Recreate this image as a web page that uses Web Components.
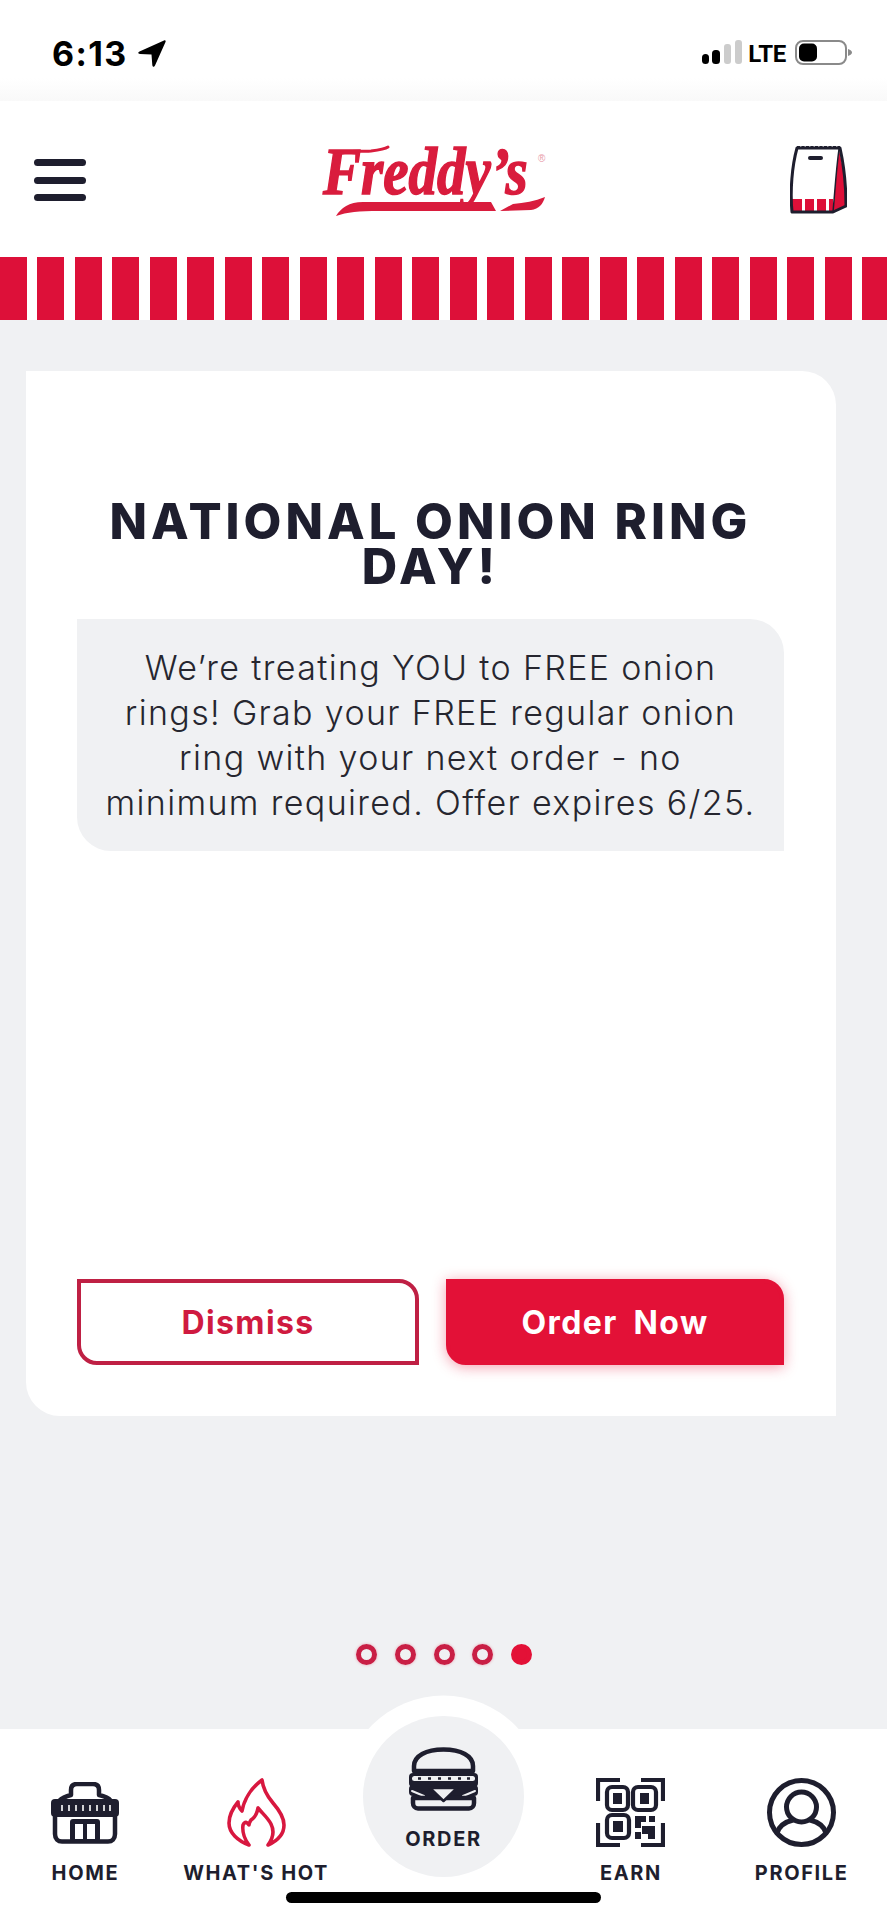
<!DOCTYPE html>
<html lang="en">
<head>
<meta charset="utf-8">
<title>Freddy's</title>
<style>
  html, body { margin: 0; padding: 0; background: #fff; }
  body { font-family: Inter, "Liberation Sans", sans-serif; color: #1e1e2e; }
  h1, p { margin: 0; }
</style>
</head>
<body>
<app-shell>
  <status-bar time="6:13" network="LTE"></status-bar>
  <top-header></top-header>
  <stripe-band></stripe-band>
  <promo-screen>
    <promo-card>
      <h1 slot="title">NATIONAL ONION RING DAY!</h1>
      <p slot="body">We’re treating YOU to FREE onion<br>rings! Grab your FREE regular onion<br>ring with your next order - no<br>minimum required. Offer expires 6/25.</p>
      <promo-button slot="dismiss" variant="outline">Dismiss</promo-button>
      <promo-button slot="confirm">Order Now</promo-button>
    </promo-card>
    <pager-dots count="5" active="4"></pager-dots>
  </promo-screen>
  <tab-bar>
    <tab-item label="HOME">
      <svg slot="icon" width="68" height="62" viewBox="0 0 68 62" fill="none" stroke="#1e1e2e" stroke-width="4.5" stroke-linecap="round" stroke-linejoin="round">
        <path d="M8 19C12 15 16 14 20 13V8C20 3 23 2 26 2H42C45 2 48 3 48 8V13C53 14 57 15 60 19"/>
        <rect x="0" y="17" width="68" height="18" rx="4" fill="#1e1e2e" stroke="none"/>
        <path d="M11 23v6M18 23v6M25 23v6M32 23v6M39 23v6M46 23v6M53 23v6M59 23v6" stroke="#fff" stroke-width="1.6" stroke-linecap="butt"/>
        <path d="M4 35V52C4 57 7 59.5 11 59.5H57C61 59.5 64 57 64 52V35"/>
        <rect x="19" y="37" width="30" height="23" rx="3" fill="#1e1e2e" stroke="none"/>
        <path d="M24 42h8v15h-8zM36 42h8v15h-8z" fill="#fff" stroke="none"/>
      </svg>
    </tab-item>
    <tab-item label="WHAT'S HOT">
      <svg slot="icon" width="59" height="69" viewBox="0 0 59 69" fill="none" stroke="#d8173f" stroke-width="3.6" stroke-linejoin="round">
        <path d="M35 2C36 10 40 18 46 25C53 33 57 40 57 47C57 56 50 63 41 67C47 59 47 52 44 46C41 40 36 36 31 30C30 36 27 40 24 42C23 44 22 45 22 47C20 44 18 43 16 47C15 54 18 62 22 67C11 63 2 55 2 45C2 37 6 30 11 24C11 28 13 31 15 33C17 22 24 10 35 2Z"/>
      </svg>
    </tab-item>
    <tab-item label="ORDER" featured>
      <svg slot="icon" width="69" height="64" viewBox="0 0 69 64" fill="none" stroke="#1e1e2e" stroke-width="4.5" stroke-linejoin="round" stroke-linecap="round">
        <path d="M5 24V19C5 9 17 2.5 34.5 2.5S64 9 64 19V24Z"/>
        <rect x="0" y="26" width="69" height="14" rx="4" fill="#1e1e2e" stroke="none"/>
        <rect x="3" y="29" width="63" height="5" rx="2.5" fill="#f0f1f3" stroke="none"/>
        <path d="M9 31.5h3M19 31.5h3M29 31.5h3M39 31.5h3M49 31.5h3M58 31.5h3" stroke="#1e1e2e" stroke-width="2.6" stroke-linecap="butt"/>
        <rect x="0" y="38" width="69" height="11" rx="4" fill="#1e1e2e" stroke="none"/>
        <path d="M3 44L15 49M66 44L54 49" stroke="#f0f1f3" stroke-width="2"/>
        <path d="M4 51H65V56C65 59 63 61.5 60 61.5H9C6 61.5 4 59 4 56Z"/>
        <path d="M21 41L34.5 54L48 41Z" fill="#f0f1f3" stroke="#1e1e2e" stroke-width="2.5"/>
      </svg>
    </tab-item>
    <tab-item label="EARN">
      <svg slot="icon" width="69" height="69" viewBox="0 0 69 69" fill="none" stroke="#1e1e2e" stroke-width="4.2">
        <path d="M2 23V2H24M45 2H67V23M2 45V67H24M45 67H67V45"/>
        <rect x="11" y="9" width="21" height="23" rx="5"/>
        <rect x="37" y="9" width="23" height="23" rx="5"/>
        <rect x="11" y="37" width="22" height="23" rx="5"/>
        <path d="M17 15h9v11h-9zM44 15h9v11h-9zM17 43h10v11h-10z" fill="#1e1e2e" stroke="none"/>
        <path d="M39 38h11v6h-5v6h-6zM53 38h6v6h-6zM46 48h13v13h-7v-5h-6zM39 54h6v7h-6z" fill="#1e1e2e" stroke="none"/>
      </svg>
    </tab-item>
    <tab-item label="PROFILE">
      <svg slot="icon" width="69" height="69" viewBox="0 0 69 69" fill="none" stroke="#1e1e2e" stroke-width="5" stroke-linecap="round">
        <circle cx="34.5" cy="34.5" r="32"/>
        <circle cx="34.5" cy="29" r="15"/>
        <path d="M10 55C12 48 18 44 26 42M43 42C51 44 57 48 59 55"/>
      </svg>
    </tab-item>
  </tab-bar>
</app-shell>

<script>
  customElements.define('app-shell', class AppShell extends HTMLElement {
    constructor() {
      super();
      this.attachShadow({ mode: 'open' }).innerHTML = `
        <style>
          :host { display: flex; flex-direction: column; width: 887px; height: 1920px; overflow: hidden; }
        </style>
        <slot></slot>`;
    }
  });

  customElements.define('status-bar', class StatusBar extends HTMLElement {
    constructor() {
      super();
      this.attachShadow({ mode: 'open' }).innerHTML = `
        <style>
          :host {
            display: flex;
            justify-content: space-between;
            box-sizing: border-box;
            height: 101px;
            padding: 40px 35px 0 52px;
            background: linear-gradient(#fff 78px, #f9f9f9 101px);
            color: #000;
          }
          .left, .right { display: flex; align-items: flex-start; }
          .time { font: 700 34px/27px Inter, sans-serif; letter-spacing: 1.4px; }
          .arrow { margin-left: 10px; }
          .net { font: 700 24px/25px Roboto, sans-serif; letter-spacing: -.3px; margin: 2px 9px 0 6px; }
        </style>
        <div class="left">
          <span class="time"></span>
          <svg class="arrow" width="28" height="27" viewBox="0 0 28 27"><path d="M26 .5C27.5 0 28 1 27.5 2L17 25.5C16 27.5 14.5 27 14.3 25L13.5 14.5L2 14C0 13.8 -.5 12.5 1.5 11.5Z"/></svg>
        </div>
        <div class="right">
          <svg width="40" height="25" viewBox="0 0 40 25">
            <rect x="0" y="14" width="7" height="10" rx="3.5"/>
            <rect x="10" y="10" width="8" height="14" rx="3.5"/>
            <rect x="22" y="4" width="7" height="20" rx="3" fill="#ccc"/>
            <rect x="33" y="0" width="7" height="24" rx="3" fill="#ccc"/>
          </svg>
          <span class="net"></span>
          <svg width="57" height="25" viewBox="0 0 57 25">
            <rect x="1" y="1" width="50" height="23" rx="7" fill="none" stroke="#8a8a8a" stroke-width="2"/>
            <rect x="4" y="3.5" width="18" height="18" rx="5"/>
            <path d="M53 9C55.5 10 57 11 57 12.5S55.5 15 53 16Z" fill="#8a8a8a"/>
          </svg>
        </div>`;
    }
    connectedCallback() {
      this.shadowRoot.querySelector('.time').textContent = this.getAttribute('time');
      this.shadowRoot.querySelector('.net').textContent = this.getAttribute('network');
    }
  });

  customElements.define('top-header', class TopHeader extends HTMLElement {
    constructor() {
      super();
      this.attachShadow({ mode: 'open' }).innerHTML = `
        <style>
          :host {
            display: flex;
            justify-content: space-between;
            align-items: center;
            box-sizing: border-box;
            height: 156px;
            padding: 0 40px 0 34px;
            background: #fff;
          }
          .menu { display: flex; flex-direction: column; gap: 10.5px; width: 52px; margin-top: 2px; }
          .menu i { display: block; height: 7px; border-radius: 4px; background: #1e1e2e; }
          .logo { margin-left: -6px; margin-top: 2px; }
          .logo text { font-family: "Liberation Serif", serif; font-weight: 700; font-style: italic; fill: #d91c3d; }
          .logo .word { stroke: #d91c3d; stroke-width: 1.3px; }
          .logo .mark { font-family: "Liberation Sans", sans-serif; font-style: normal; font-weight: 400; fill: #e89aa8; }
          .bag { margin-top: 2px; }
        </style>
        <div class="menu"><i></i><i></i><i></i></div>
        <svg class="logo" width="232" height="104" viewBox="0 -14 232 104">
          <text class="word" transform="translate(4 52) scale(1 1.17)" font-size="57">Freddy’s</text>
          <text class="mark" x="219" y="20" font-size="10">®</text>
          <path d="M17 13C30 7 42 10 52 9C60 8 66 7 69 5" fill="none" stroke="#d91c3d" stroke-width="3" stroke-linecap="round"/>
          <path d="M17 74C22 66 30 60 44 60H172L177 69H60C40 69 28 70 17 74Z" fill="#d91c3d"/>
          <path d="M181 69L194 62C205 61 216 59 226 55C224 62 220 67 212 68Z" fill="#d91c3d"/>
        </svg>
        <svg class="bag" width="57" height="68" viewBox="0 0 57 68" stroke-linejoin="round">
          <path d="M7 2L50 2L44 66H2C0 45 2 20 7 2Z" fill="#fff"/>
          <path d="M1.5 53H43V66H2Z" fill="#dd1039"/>
          <path d="M12 53h3v13h-3zM24 53h3v13h-3zM36 53h3v13h-3z" fill="#fff"/>
          <path d="M49 4C53 20 56 40 56 60L43 66C45 45 46 25 49 4Z" fill="#dd1039"/>
          <path d="M7 2H50C54 20 56 40 56 60L43 66H2C0 45 2 20 7 2Z" fill="none" stroke="#1e1e2e" stroke-width="3"/>
          <path d="M49 3C46 25 45 45 43 66" fill="none" stroke="#1e1e2e" stroke-width="1.5"/>
          <path d="M7 1.5H50" stroke="#1e1e2e" stroke-width="3" stroke-dasharray="3 1.5"/>
          <rect x="18" y="10" width="15" height="4" rx="2" fill="#1e1e2e"/>
        </svg>`;
    }
  });

  customElements.define('stripe-band', class StripeBand extends HTMLElement {
    constructor() {
      super();
      this.attachShadow({ mode: 'open' }).innerHTML = `
        <style>
          :host {
            display: block;
            height: 63px;
            background: repeating-linear-gradient(90deg, #dd1039 0 26.6px, #fff 26.6px 37.5px);
          }
        </style>`;
    }
  });

  customElements.define('promo-screen', class PromoScreen extends HTMLElement {
    constructor() {
      super();
      this.attachShadow({ mode: 'open' }).innerHTML = `
        <style>
          :host {
            display: flex;
            flex-direction: column;
            flex: 1;
            box-sizing: border-box;
            padding: 51px 51px 64px 26px;
            background: #f0f1f3;
          }
        </style>
        <slot></slot>`;
    }
  });

  customElements.define('promo-card', class PromoCard extends HTMLElement {
    constructor() {
      super();
      this.attachShadow({ mode: 'open' }).innerHTML = `
        <style>
          :host {
            display: flex;
            flex-direction: column;
            box-sizing: border-box;
            width: 810px;
            height: 1045px;
            padding: 128px 52px 51px 51px;
            background: #fff;
            border-radius: 0 34px 0 34px;
          }
          ::slotted(h1) {
            font: 800 49px/45px Inter, sans-serif;
            letter-spacing: 4px;
            text-align: center;
            color: #1e1e2e;
          }
          .message {
            margin-top: 30px;
            padding: 26px 0;
            background: #f0f1f3;
            border-radius: 0 34px 0 34px;
          }
          ::slotted(p) {
            font: 300 34px/45px Inter, sans-serif;
            letter-spacing: 1.35px;
            text-align: center;
            color: #26262f;
          }
          .actions { display: grid; grid-template-columns: 342px 338px; gap: 27px; margin-top: auto; }
        </style>
        <slot name="title"></slot>
        <div class="message"><slot name="body"></slot></div>
        <div class="actions"><slot name="dismiss"></slot><slot name="confirm"></slot></div>`;
    }
  });

  customElements.define('promo-button', class PromoButton extends HTMLElement {
    constructor() {
      super();
      this.attachShadow({ mode: 'open' }).innerHTML = `
        <style>
          :host { display: block; }
          button {
            display: block;
            box-sizing: border-box;
            width: 100%;
            height: 86px;
            padding: 0;
            border: 4px solid #e31137;
            border-radius: 0 20px 0 20px;
            background: #e31137;
            box-shadow: 0 2px 14px rgba(227, 17, 55, .4);
            color: #fff;
            font: 700 32px Inter, sans-serif;
            letter-spacing: 1.4px;
            word-spacing: 7px;
          }
          :host([variant="outline"]) button {
            background: #fff;
            border-color: #bf2044;
            box-shadow: none;
            color: #cf1a40;
          }
        </style>
        <button type="button"><slot></slot></button>`;
    }
  });

  customElements.define('pager-dots', class PagerDots extends HTMLElement {
    constructor() {
      super();
      this.attachShadow({ mode: 'open' }).innerHTML = `
        <style>
          :host { display: flex; justify-content: center; gap: 17.7px; width: 836px; margin-top: auto; }
          i {
            display: block;
            box-sizing: border-box;
            width: 21px;
            height: 21px;
            border: 5.5px solid #c91f45;
            border-radius: 50%;
            box-shadow: 0 0 3px rgba(227, 17, 55, .35);
          }
          i.on { background: #e31137; border-color: #e31137; box-shadow: none; }
        </style>`;
    }
    connectedCallback() {
      const active = Number(this.getAttribute('active'));
      for (let n = 0; n < Number(this.getAttribute('count')); n++) {
        const dot = document.createElement('i');
        if (n === active) dot.className = 'on';
        this.shadowRoot.appendChild(dot);
      }
    }
  });

  customElements.define('tab-bar', class TabBar extends HTMLElement {
    constructor() {
      super();
      this.attachShadow({ mode: 'open' }).innerHTML = `
        <style>
          :host { display: block; height: 191px; box-sizing: border-box; padding-top: 49px; background: #fff; }
          .tabs { display: grid; grid-template-columns: 1fr 1fr 204px 1fr 1fr; height: 114px; }
          .home-bar { position: relative; width: 315px; height: 11px; margin: 0 auto; border-radius: 6px; background: #000; }
        </style>
        <div class="tabs"><slot></slot></div>
        <div class="home-bar"></div>`;
    }
  });

  customElements.define('tab-item', class TabItem extends HTMLElement {
    constructor() {
      super();
      this.attachShadow({ mode: 'open' }).innerHTML = `
        <style>
          :host { display: flex; flex-direction: column; align-items: center; position: relative; }
          .icon { display: flex; align-items: center; justify-content: center; height: 69px; }
          .label { margin-top: 14px; font: 700 20px/24px Inter, sans-serif; letter-spacing: 1.6px; white-space: nowrap; color: #1e1e2e; }
          /* the raised middle tab sits over the page edge */
          :host([featured]) .disc {
            position: absolute;
            top: -62px;
            left: 50%;
            box-sizing: border-box;
            width: 161px;
            height: 161px;
            margin-left: -80.5px;
            border-radius: 50%;
            background: #f0f1f3;
            box-shadow: 0 0 0 20.5px #fff;
          }
          :host([featured]) .icon { position: relative; height: 64px; margin-top: -31px; }
          :host([featured]) .label { position: relative; margin-top: 16px; }
        </style>
        <div class="disc"></div>
        <div class="icon"><slot name="icon"></slot></div>
        <div class="label"></div>`;
    }
    connectedCallback() {
      this.shadowRoot.querySelector('.label').textContent = this.getAttribute('label');
    }
  });
</script>
</body>
</html>
